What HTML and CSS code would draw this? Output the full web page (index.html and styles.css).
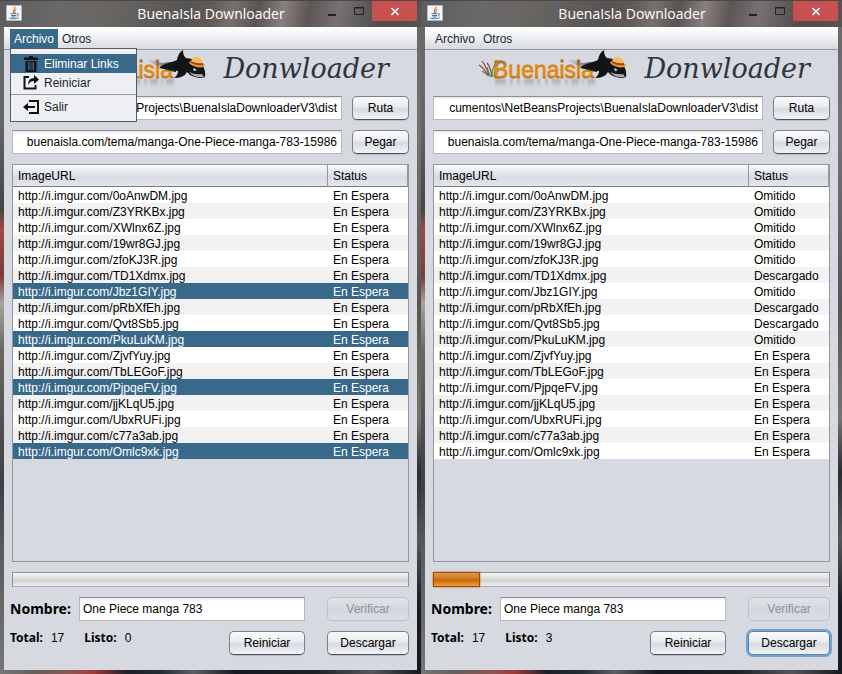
FILE: index.html
```
<!DOCTYPE html>
<html lang="es">
<head>
<meta charset="utf-8">
<title>BuenaIsla Downloader</title>
<link rel="stylesheet" href="styles.css">
</head>
<body>
<svg class="defs" aria-hidden="true">
  <defs>
    <linearGradient id="orange" x1="0" y1="0" x2="0" y2="1">
      <stop offset="0" stop-color="#8a6038"/><stop offset=".4" stop-color="#e08a10"/><stop offset=".7" stop-color="#e08a14"/><stop offset="1" stop-color="#7a4410"/>
    </linearGradient>
    <linearGradient id="fade" x1="0" y1="0" x2="0" y2="1">
      <stop offset="0" stop-color="#7d6f66" stop-opacity=".5"/><stop offset="1" stop-color="#8b8a90" stop-opacity="0"/>
    </linearGradient>
    <linearGradient id="tail" x1="0" y1="0" x2="1" y2="0">
      <stop offset="0" stop-color="#777" stop-opacity="0"/><stop offset=".6" stop-color="#444" stop-opacity=".6"/><stop offset="1" stop-color="#151515"/>
    </linearGradient>
    <filter id="soft" x="-5%" y="-20%" width="110%" height="140%"><feGaussianBlur stdDeviation=".8"/></filter>
    <symbol id="java" viewBox="0 0 16 16">
      <rect width="16" height="16" rx="1" fill="#a9bccd"/>
      <rect x="1" y="1" width="14" height="14" fill="#f4f6f8"/>
      <path d="M8.600 1.500C10 4 5.600 4.700 7.600 8M10.300 4.200C7.500 5.500 9.800 6.400 8.500 8.200" fill="none" stroke="#e5732a" stroke-width="1.200"/>
      <path d="M4.500 8.700H10.500M11 8.800C13.500 8.300 12.800 11 10.500 11M5 10.500H10M5.500 12H9.500M3 12.500C4 14.200 11 14.200 12.700 12.500" fill="none" stroke="#466f99" stroke-width="1"/>
    </symbol>
    <symbol id="logo" viewBox="0 0 150 41">
      <path d="M17 29H28V38H17ZM32 29H35V38H32ZM39 29H42V38H39ZM46 29H56V38H46ZM59 29H62V38H59ZM67 29H70V38H67ZM74 29H83V38H74ZM87 29H90V38H87ZM93 29H101V38H93ZM104 29H106V38H104ZM109 29H117V38H109Z" fill="url(#fade)" filter="url(#soft)"/>
      <g fill="none" stroke-width="1.200">
        <path d="M10 26Q6 18 1 15M11 26Q8 16 4 11M14 26Q12 16 9 13" stroke="#8c4a3d"/>
        <path d="M11 26Q7 23 4 21M14 27Q14 18 18 13M16 27Q17 17 22 12M13 27Q10 22 9 17M17 27Q20 20 23 18" stroke="#5e8058"/>
      </g>
      <text x="15" y="28" class="logo-word" fill="url(#orange)" stroke="url(#orange)" stroke-width=".8">Buenaisla</text>
      <path d="M88 9Q98 10 105 13Q111 12 119 12V22Q109 21 102 16Q94 14 88 9Z" fill="url(#tail)"/>
      <path d="M102 18Q106 14 112 13Q118 11 120 10Q121 3 126 0Q126 6 129 8Q139 9 145 15Q149 20 148 27Q144 29 138 27Q133 26 130 22Q127 28 117 28Q121 25 121 21Q111 20 102 18Z" fill="#121416"/>
      <path d="M132 22Q138 25 145 24L147 27Q139 28 134 24Z" fill="#a9adb0"/>
      <path d="M136 18L140 20L137 21Z" fill="#e9ebed"/>
      <ellipse cx="140" cy="14" rx="8" ry="3" transform="rotate(13 140 14)" fill="#d99b31"/>
      <path d="M134 13Q134 6 140 7Q146 8 146 15Q140 16 134 13Z" fill="#efbf50"/>
      <path d="M134 11Q140 14 146 13V15Q140 16 134 13Z" fill="#b8322d"/>
    </symbol>
  </defs>
</svg>

<main class="desktop">
  <section class="window">
    <header class="titlebar">
      <svg class="app-icon"><use href="#java"/></svg>
      <h1>BuenaIsla Downloader</h1>
      <div class="controls">
        <button class="ctl" aria-label="Minimizar"><svg viewBox="0 0 10 10"><path d="M1 9H9" stroke="#222" stroke-width="2"/></svg></button>
        <button class="ctl" aria-label="Maximizar"><svg viewBox="0 0 10 10"><path d="M.5 1.500H9.500V8.500H.5Z" fill="none" stroke="#222"/><path d="M0 2H10" stroke="#222"/></svg></button>
        <button class="ctl close" aria-label="Cerrar"><svg viewBox="0 0 10 10"><path d="M1.500 2L8.500 9M8.500 2L1.500 9" stroke="#fff" stroke-width="1.700"/></svg></button>
      </div>
    </header>
    <div class="client">
      <nav class="menubar">
        <button class="menu open">Archivo</button>
        <button class="menu">Otros</button>
        <div class="popup">
          <button class="item active"><svg viewBox="0 0 16 16"><path d="M6 0H10V1.500H15V4H1V1.500H6ZM2.500 5H13.500V16H2.500ZM5 6V14H6.500V6ZM7.500 6V14H8.500V6ZM9.500 6V14H11V6Z" fill="#111" fill-rule="evenodd"/></svg>Eliminar Links</button>
          <button class="item"><svg viewBox="0 0 16 16"><path d="M6 2H1.500V13.500H12.500V10" fill="none" stroke="#111" stroke-width="2"/><path d="M5 10Q5 3 11 3V0L16 4.500L11 9V6Q7 6 5 10Z" fill="#111"/></svg>Reiniciar</button>
          <hr>
          <button class="item"><svg viewBox="0 0 16 16"><path d="M6 2H15V14H6M3 8H12" fill="none" stroke="#111" stroke-width="2"/><path d="M0 8L5 4V12Z" fill="#111"/></svg>Salir</button>
        </div>
      </nav>
      <div class="brand"><svg class="logo" role="img" aria-label="Buenaisla"><use href="#logo"/></svg><span>Donwloader</span></div>
      <div class="body">
        <div class="row"><input class="end" aria-label="Ruta" value="cumentos\NetBeansProjects\BuenaIslaDownloaderV3\dist"><button class="btn small">Ruta</button></div>
        <div class="row"><input class="end" aria-label="Enlace" value="buenaisla.com/tema/manga-One-Piece-manga-783-15986"><button class="btn small">Pegar</button></div>
        <div class="list">
          <table>
            <thead><tr><th>ImageURL</th><th class="status">Status</th></tr></thead>
            <tbody>
              <tr><td>http://i.imgur.com/0oAnwDM.jpg</td><td>En Espera</td></tr>
              <tr><td>http://i.imgur.com/Z3YRKBx.jpg</td><td>En Espera</td></tr>
              <tr><td>http://i.imgur.com/XWlnx6Z.jpg</td><td>En Espera</td></tr>
              <tr><td>http://i.imgur.com/19wr8GJ.jpg</td><td>En Espera</td></tr>
              <tr><td>http://i.imgur.com/zfoKJ3R.jpg</td><td>En Espera</td></tr>
              <tr><td>http://i.imgur.com/TD1Xdmx.jpg</td><td>En Espera</td></tr>
              <tr class="selected"><td>http://i.imgur.com/Jbz1GIY.jpg</td><td>En Espera</td></tr>
              <tr><td>http://i.imgur.com/pRbXfEh.jpg</td><td>En Espera</td></tr>
              <tr><td>http://i.imgur.com/Qvt8Sb5.jpg</td><td>En Espera</td></tr>
              <tr class="selected"><td>http://i.imgur.com/PkuLuKM.jpg</td><td>En Espera</td></tr>
              <tr><td>http://i.imgur.com/ZjvfYuy.jpg</td><td>En Espera</td></tr>
              <tr><td>http://i.imgur.com/TbLEGoF.jpg</td><td>En Espera</td></tr>
              <tr class="selected"><td>http://i.imgur.com/PjpqeFV.jpg</td><td>En Espera</td></tr>
              <tr><td>http://i.imgur.com/jjKLqU5.jpg</td><td>En Espera</td></tr>
              <tr><td>http://i.imgur.com/UbxRUFi.jpg</td><td>En Espera</td></tr>
              <tr><td>http://i.imgur.com/c77a3ab.jpg</td><td>En Espera</td></tr>
              <tr class="selected"><td>http://i.imgur.com/Omlc9xk.jpg</td><td>En Espera</td></tr>
            </tbody>
          </table>
        </div>
        <div class="progress" role="progressbar" aria-label="Progreso" aria-valuenow="0"></div>
        <div class="foot">
          <div class="name"><label for="name-a">Nombre:</label><input id="name-a" value="One Piece manga 783"></div>
          <button class="btn" disabled>Verificar</button>
          <div class="totals"><p><b>Total:</b>17</p><p><b>Listo:</b>0</p><button class="btn reset">Reiniciar</button></div>
          <button class="btn">Descargar</button>
        </div>
      </div>
    </div>
  </section>

  <section class="window">
    <header class="titlebar">
      <svg class="app-icon"><use href="#java"/></svg>
      <h1>BuenaIsla Downloader</h1>
      <div class="controls">
        <button class="ctl" aria-label="Minimizar"><svg viewBox="0 0 10 10"><path d="M1 9H9" stroke="#222" stroke-width="2"/></svg></button>
        <button class="ctl" aria-label="Maximizar"><svg viewBox="0 0 10 10"><path d="M.5 1.500H9.500V8.500H.5Z" fill="none" stroke="#222"/><path d="M0 2H10" stroke="#222"/></svg></button>
        <button class="ctl close" aria-label="Cerrar"><svg viewBox="0 0 10 10"><path d="M1.500 2L8.500 9M8.500 2L1.500 9" stroke="#fff" stroke-width="1.700"/></svg></button>
      </div>
    </header>
    <div class="client">
      <nav class="menubar">
        <button class="menu">Archivo</button>
        <button class="menu">Otros</button>
      </nav>
      <div class="brand"><svg class="logo" role="img" aria-label="Buenaisla"><use href="#logo"/></svg><span>Donwloader</span></div>
      <div class="body">
        <div class="row"><input class="end" aria-label="Ruta" value="cumentos\NetBeansProjects\BuenaIslaDownloaderV3\dist"><button class="btn small">Ruta</button></div>
        <div class="row"><input class="end" aria-label="Enlace" value="buenaisla.com/tema/manga-One-Piece-manga-783-15986"><button class="btn small">Pegar</button></div>
        <div class="list">
          <table>
            <thead><tr><th>ImageURL</th><th class="status">Status</th></tr></thead>
            <tbody>
              <tr><td>http://i.imgur.com/0oAnwDM.jpg</td><td>Omitido</td></tr>
              <tr><td>http://i.imgur.com/Z3YRKBx.jpg</td><td>Omitido</td></tr>
              <tr><td>http://i.imgur.com/XWlnx6Z.jpg</td><td>Omitido</td></tr>
              <tr><td>http://i.imgur.com/19wr8GJ.jpg</td><td>Omitido</td></tr>
              <tr><td>http://i.imgur.com/zfoKJ3R.jpg</td><td>Omitido</td></tr>
              <tr><td>http://i.imgur.com/TD1Xdmx.jpg</td><td>Descargado</td></tr>
              <tr><td>http://i.imgur.com/Jbz1GIY.jpg</td><td>Omitido</td></tr>
              <tr><td>http://i.imgur.com/pRbXfEh.jpg</td><td>Descargado</td></tr>
              <tr><td>http://i.imgur.com/Qvt8Sb5.jpg</td><td>Descargado</td></tr>
              <tr><td>http://i.imgur.com/PkuLuKM.jpg</td><td>Omitido</td></tr>
              <tr><td>http://i.imgur.com/ZjvfYuy.jpg</td><td>En Espera</td></tr>
              <tr><td>http://i.imgur.com/TbLEGoF.jpg</td><td>En Espera</td></tr>
              <tr><td>http://i.imgur.com/PjpqeFV.jpg</td><td>En Espera</td></tr>
              <tr><td>http://i.imgur.com/jjKLqU5.jpg</td><td>En Espera</td></tr>
              <tr><td>http://i.imgur.com/UbxRUFi.jpg</td><td>En Espera</td></tr>
              <tr><td>http://i.imgur.com/c77a3ab.jpg</td><td>En Espera</td></tr>
              <tr><td>http://i.imgur.com/Omlc9xk.jpg</td><td>En Espera</td></tr>
            </tbody>
          </table>
        </div>
        <div class="progress" role="progressbar" aria-label="Progreso" aria-valuenow="12"><div class="bar" style="width:12%"></div></div>
        <div class="foot">
          <div class="name"><label for="name-b">Nombre:</label><input id="name-b" value="One Piece manga 783"></div>
          <button class="btn" disabled>Verificar</button>
          <div class="totals"><p><b>Total:</b>17</p><p><b>Listo:</b>3</p><button class="btn reset">Reiniciar</button></div>
          <button class="btn focused">Descargar</button>
        </div>
      </div>
    </div>
  </section>
</main>
</body>
</html>
```
FILE: styles.css
```
* { box-sizing: border-box; }
body { margin: 0; font: 12px/16px "Liberation Sans", Arial, sans-serif; color: #000; background: #555; }
button, input { font: inherit; color: inherit; }
.defs { position: absolute; width: 0; height: 0; }
.desktop { display: grid; grid-template-columns: 1fr 1fr; min-height: 100vh; }

.window {
  display: flex; flex-direction: column; padding: 0 4px 4px;
  background:
    linear-gradient(90deg, #777 0, #665f5c 8%, #8e5552 17%, #a03c38 22%, #1d2129 30%, #232a33 38%, #5c6065 46%, #15181e 56%, #1d2025 75%, #55575a 88%, #15181e 100%) bottom / 100% 4px no-repeat,
    linear-gradient(#69696a 0, #666 18%, #454547 31%, #a04844 34%, #7c3c39 41%, #a5a49f 45%, #6d6661 52%, #4a4a4b 66%, #3a4246 72%, #5c5c5d 82%, #777 100%) left / 4px 100% no-repeat,
    linear-gradient(#666 0, #737373 20%, #555 45%, #77746f 62%, #2a2c30 70%, #55585c 80%, #181c22 90%, #181c22 100%) right / 4px 100% no-repeat,
    #666;
}
.titlebar {
  display: flex; align-items: flex-start; height: 27px; margin: 0 -4px; padding: 0 4px 0 6px;
  border-top: 1px solid #494949;
  background: linear-gradient(100deg, #5d5b5b 0, #6b6968 14%, #696664 24%, #625e5b 34%, #575352 44%, #625954 50%, #77706b 55%, #5a5351 61%, #87807f 67%, #5d5655 73%, #777172 80%, #504c4b 90%, #565454 100%);
}
.app-icon { width: 16px; height: 16px; margin-top: 4px; }
h1 { flex: 1; margin: 0; padding-left: 82px; text-align: center; font: 14px/26px "Open Sans", "Noto Sans", sans-serif; color: #fff; white-space: nowrap; }
.controls { display: flex; }
.ctl { width: 27px; height: 20px; padding: 0; border: 0; background: none; }
.ctl svg { width: 10px; height: 10px; display: block; margin: 0 auto; }
.close { width: 45px; background: #c75050; }

.client { flex: 1; background: #d6d9e0; }
.menubar { position: relative; display: flex; height: 23px; padding: 2px 6px 1px; border-bottom: 1px solid #8f97a5; background: linear-gradient(#fff, #f5f6f8 30%, #d7dae1); }
.menu { padding: 0 4px; border: 0; background: none; color: #23272e; }
.menu.open { background: #39698a; color: #fff; }
.popup { position: absolute; z-index: 1; left: 6px; top: 21px; width: 127px; padding: 5px 0; border: 1px solid #555a63; background: #edeff2; }
.item { display: flex; align-items: center; gap: 5px; width: 100%; height: 19px; padding: 0 12px; border: 0; background: none; color: #23272e; }
.item svg { width: 16px; height: 16px; }
.item.active { background: #39698a; color: #fff; }
hr { height: 1px; margin: 2px 0; border: 0; background: #9297a1; }

.brand { display: flex; align-items: flex-start; justify-content: flex-end; gap: 16px; height: 46px; padding-right: 28px; }
.logo { width: 150px; height: 41px; }
.logo-word { font: 23px "Liberation Sans", Arial, sans-serif; }
.brand span { font: italic 27px/38px "DejaVu Serif", serif; color: #2f353d; }

.body { padding: 0 8px 15px; }
.row { display: flex; gap: 10px; margin-bottom: 10px; }
input { flex: 1; min-width: 0; height: 24px; padding: 0 4px 0 3px; border: 1px solid #b5b8bd; border-top-color: #8b8d92; border-radius: 0; background: linear-gradient(#e5e5e5, #fff 3px); }
.end { text-align: right; }
.btn { height: 24px; padding: 0; border: 1px solid #7d8189; border-bottom-color: #4e5158; border-radius: 5px; background: linear-gradient(#fbfbfc, #eceef1 40%, #d8dbe1 55%, #f0f3f7); box-shadow: 0 1px 1px #b6b9c0; }
.btn:disabled { color: #8e9198; border-color: #bdc1c8; background: linear-gradient(#dfe2e7, #d3d7de 60%, #dce0e6); box-shadow: none; }
.small { width: 57px; }

.list { height: 398px; border: 1px solid #9297a1; }
table { width: 100%; border-collapse: separate; border-spacing: 0; table-layout: fixed; }
th { height: 22px; padding: 0 5px; text-align: left; font-weight: normal; border-right: 1px solid #9297a1; border-bottom: 1px solid #787c86; background: linear-gradient(#fff, #edeff2 20%, #d8dbe2 60%, #e3e6eb); }
.status { width: 80px; }
td { height: 16px; padding: 2px 0 0 5px; line-height: 14px; white-space: nowrap; }
tbody tr { background: #fff; }
tbody tr:nth-child(even) { background: #f2f2f2; }
tbody tr.selected { background: #39698a; color: #fff; }

.progress { height: 15px; margin: 10px 0; border: 1px solid #8f9196; border-bottom-color: #a9abb0; background: linear-gradient(#f5f5f6, #ddd 45%, #d0d0d2 55%, #efefef); }
.bar { height: 15px; margin: -1px; border: 1px solid #a4430e; background: linear-gradient(#dc9a52, #cf7b20 40%, #c46a08 55%, #f0a03c); box-shadow: 0 0 2px #d06a20; }

.foot { display: grid; grid-template-columns: 1fr 82px; gap: 10px 22px; }
.name { display: flex; align-items: center; margin-left: -2px; }
.name label { width: 69px; font: bold 14px/24px "Noto Sans", "Open Sans", sans-serif; }
.totals { display: flex; gap: 20px; margin-left: -2px; }
.totals p { margin: 0; line-height: 14px; }
.totals b { margin-right: 8px; font: bold 12px/14px "Noto Sans", "Open Sans", sans-serif; }
.reset { width: 76px; margin-left: auto; }
.focused { border-color: #5b7fa6; box-shadow: 0 0 0 2px #73a4d1; }
```
